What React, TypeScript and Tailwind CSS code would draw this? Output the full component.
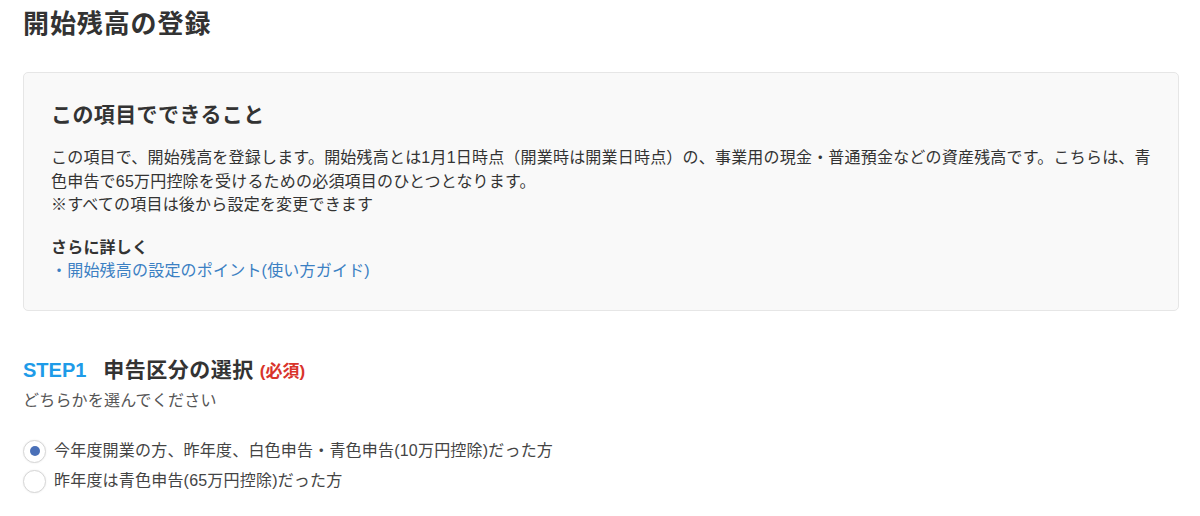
import React from "react";

const font = { fontFamily: '"Liberation Sans", "Noto Sans CJK JP", sans-serif' };

function Radio({ checked, label }: { checked?: boolean; label: string }) {
  return (
    <label className="flex items-center h-[30px] gap-[8px]">
      <span className="w-[23px] h-[23px] rounded-full bg-white border border-[#d6d6d6] shadow-[0_0_2px_rgba(0,0,0,0.08)] flex items-center justify-center shrink-0">
        {checked && <span className="w-[10px] h-[10px] rounded-full bg-[#4a70b8]" />}
      </span>
      <span className="text-[16px] tracking-[0.2px] text-[#444]">{label}</span>
    </label>
  );
}

export default function App() {
  return (
    <div className="w-[1200px] h-[516px] bg-white pl-[23px] pr-[21px] pt-[6px] text-[#333] overflow-hidden" style={font}>
      <h1 className="text-[26px] leading-[36px] font-bold tracking-[0.9px] text-[#333]">開始残高の登録</h1>

      <div className="mt-[30px] bg-[#f9f9f9] border border-[#e6e6e6] rounded-[5px] pl-[27px] pr-[10px] pt-[27px] pb-[27px]">
        <h2 className="text-[21px] leading-[30px] font-bold tracking-[0.4px] text-[#333]">この項目でできること</h2>
        <p className="mt-[16px] whitespace-nowrap text-[16px] leading-[23.5px] tracking-[0.2px] text-[#333]">
          この項目で、開始残高を登録します。開始残高とは1月1日時点（開業時は開業日時点）の、事業用の現金・普通預金などの資産残高です。こちらは、青
          <br />
          色申告で65万円控除を受けるための必須項目のひとつとなります。
          <br />
          ※すべての項目は後から設定を変更できます
        </p>
        <p className="mt-[19px] text-[16px] leading-[23.5px] font-bold tracking-[0.2px] text-[#333]">さらに詳しく</p>
        <p className="text-[16px] leading-[23.5px] tracking-[0.2px] text-[#3b80c3]">・開始残高の設定のポイント(使い方ガイド)</p>
      </div>

      <div className="mt-[43px] flex items-baseline h-[30px]">
        <span className="text-[20px] font-bold text-[#1e9be8]">STEP1</span>
        <span className="ml-[17px] text-[21px] font-bold tracking-[0.5px] text-[#333]">申告区分の選択</span>
        <span className="ml-[6px] text-[17px] font-bold text-[#d9342b]">(必須)</span>
      </div>
      <p className="mt-[5px] text-[16px] leading-[23.5px] tracking-[0.2px] text-[#555]">どちらかを選んでください</p>

      <div className="mt-[24px] flex flex-col">
        <Radio checked label="今年度開業の方、昨年度、白色申告・青色申告(10万円控除)だった方" />
        <Radio label="昨年度は青色申告(65万円控除)だった方" />
      </div>
    </div>
  );
}
